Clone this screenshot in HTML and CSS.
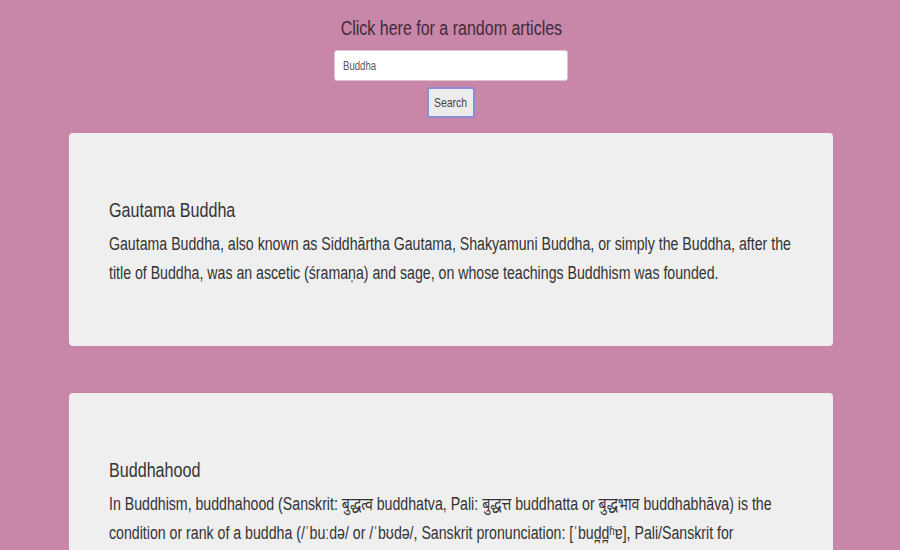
FILE: index.html
```html
<!DOCTYPE html>
<html>
<head>
<meta charset="utf-8">
<link rel="stylesheet" href="styles.css">
</head>
<body>
<header class="top">
  <a class="random" href="#"><span class="narrow-c">Click here for a random articles</span></a>
  <div class="search"><span class="search-val">Buddha</span></div>
  <button class="btn"><span class="narrow-c">Search</span></button>
</header>
<main class="results">
  <section class="card">
    <div class="squeeze">
      <h2 class="title">Gautama Buddha</h2>
      <p class="text">Gautama Buddha, also known as Siddhārtha Gautama, Shakyamuni Buddha, or simply the Buddha, after the title of Buddha, was an ascetic (śramaṇa) and sage, on whose teachings Buddhism was founded.</p>
    </div>
  </section>
  <section class="card">
    <div class="squeeze">
      <h2 class="title">Buddhahood</h2>
      <p class="text">In Buddhism, buddhahood (Sanskrit: बुद्धत्व buddhatva, Pali: बुद्धत्त buddhatta or बुद्धभाव buddhabhāva) is the condition or rank of a buddha (/ˈbuːdə/ or /ˈbʊdə/, Sanskrit pronunciation: [ˈbud̪d̪ʱɐ], Pali/Sanskrit for "awakened one") in the Buddhist tradition.</p>
    </div>
  </section>
</main>
</body>
</html>
```
FILE: styles.css
```css
html, body {
  margin: 0;
  padding: 0;
}
body {
  background: #c886a8;
  font-family: "Liberation Sans", Arial, "Noto Sans", sans-serif;
  color: #333;
}
.top {
  display: flex;
  flex-direction: column;
  align-items: center;
  padding-top: 16px;
  padding-left: 2px;
}
.narrow-c {
  display: inline-block;
  transform: scaleX(0.8);
  transform-origin: 50% 50%;
}
.random {
  font-size: 20px;
  color: #3f2b3a;
  text-decoration: none;
  line-height: 24px;
}
.search {
  margin-top: 10px;
  width: 234px;
  height: 31px;
  box-sizing: border-box;
  border: 1px solid #dcc6d2;
  border-radius: 3px;
  background: #fff;
  display: flex;
  align-items: center;
  padding-left: 8px;
}
.search-val {
  display: inline-block;
  font-size: 12px;
  color: #555;
  transform: scaleX(0.8);
  transform-origin: 0 50%;
}
.btn {
  margin-top: 6px;
  width: 48px;
  height: 31px;
  box-sizing: border-box;
  border: 2px solid #8a8ed6;
  border-radius: 3px;
  background: #ececec;
  font-family: inherit;
  font-size: 13px;
  color: #444;
  padding: 0;
}
.results {
  display: flex;
  flex-direction: column;
  align-items: center;
  gap: 47px;
  margin-top: 15px;
  padding-left: 2px;
}
.card {
  width: 764px;
  box-sizing: border-box;
  background: #efefef;
  border-radius: 4px;
  padding: 65px 40px 58px;
  overflow: hidden;
}
.squeeze {
  width: 875px;
  transform: scaleX(0.786);
  transform-origin: 0 0;
}
.title {
  margin: 0 0 8px;
  font-size: 20.5px;
  font-weight: normal;
  color: #333;
  line-height: 24px;
}
.text {
  margin: 0;
  font-size: 18px;
  line-height: 29px;
  color: #333;
}
```
